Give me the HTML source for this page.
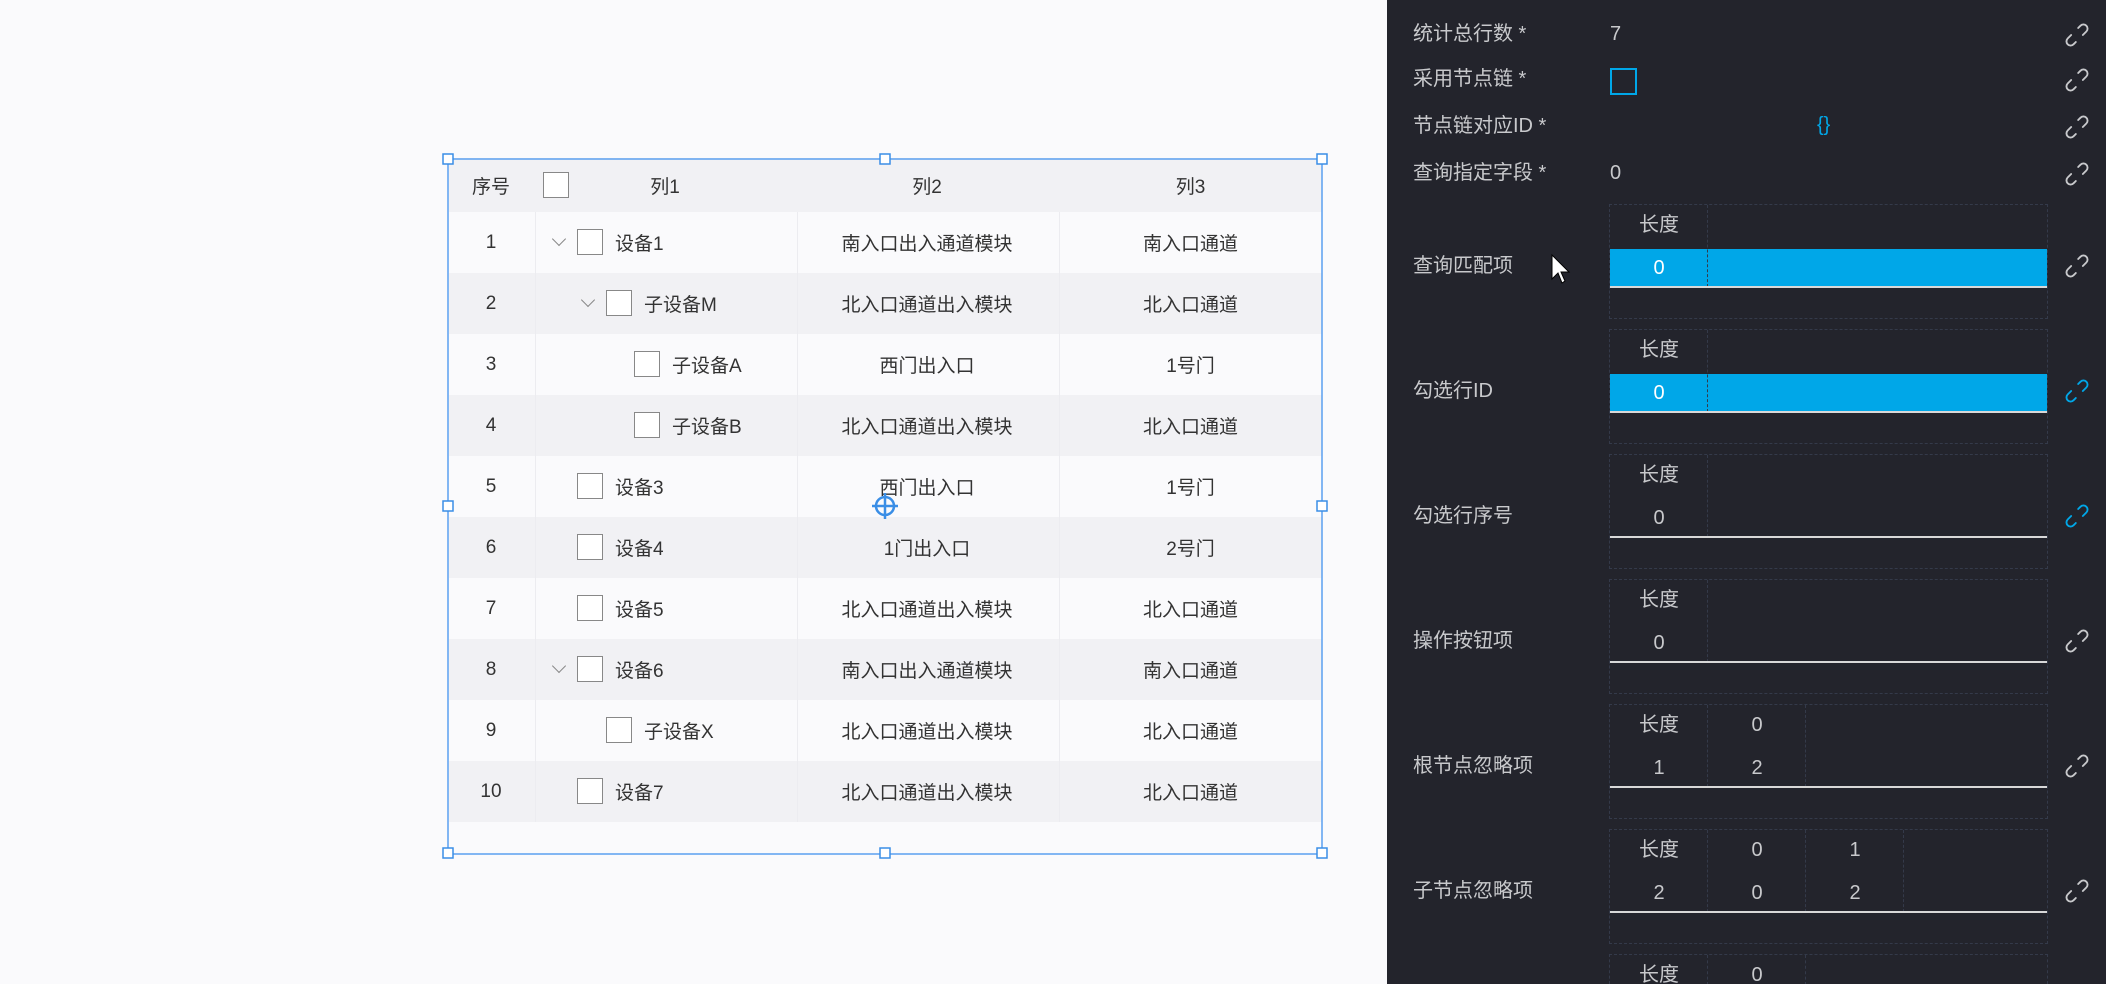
<!DOCTYPE html>
<html style="width:2106px;height:984px;overflow:hidden"><head><meta charset="utf-8">
<style>
*{margin:0;padding:0;box-sizing:border-box}
body{width:2106px;height:984px;overflow:hidden;background:#fafafc;font-family:"Liberation Sans","Noto Sans CJK SC",sans-serif;position:relative}
.tbl{position:absolute;left:449px;top:158px;width:873px;}
.row{position:absolute;left:0;width:873px;height:61px;font-size:19px;color:#333}
.row.alt,.hdr{background:#f1f1f4}
.hdr{height:54px;top:0}
.c{position:absolute;top:0;height:100%;display:flex;align-items:center;justify-content:center}
.vl{position:absolute;top:54px;width:1px;height:610px;background:#ececf0}
.cb{position:absolute;width:26px;height:26px;border:1.5px solid #888;background:#fff}
.chev{position:absolute;width:10px;height:10px;border-right:1.5px solid #888;border-bottom:1.5px solid #888;transform:rotate(45deg)}
.panel{position:absolute;left:1387px;top:0;width:719px;height:984px;background:#23242c;color:#c8c9cc;font-size:20px;overflow:hidden;line-height:24px}
.lab{position:absolute;left:26px}
.val{position:absolute;left:223px}
.lk{position:absolute;left:676px;width:28px;height:28px}
.box{position:absolute;left:222px;width:439px;height:115px;border:1px dashed #343a4a}
.box .col{position:absolute;top:0;height:82px;width:98px;border-right:1px dashed #343a4a}
.box .t{position:absolute;width:98px;text-align:center;line-height:24px;height:24px}
.box .ul{position:absolute;left:0;top:81px;width:437px;height:2px;background:#d8d8d8}
.box .blue{position:absolute;left:0;top:44px;width:437px;height:37px;background:#00a7e8}
</style></head><body>
<div class="tbl">
<div class="hdr row" style="height:54px">
<div class="c" style="left:0;width:84px">序号</div>
<div class="cb" style="left:94px;top:14px"></div>
<div class="c" style="left:86px;width:260px">列1</div>
<div class="c" style="left:347px;width:262px">列2</div>
<div class="c" style="left:610px;width:263px">列3</div>
</div>
</div>
<div id="rows"></div>
<svg style="position:absolute;left:0;top:0" width="2106" height="984">
<rect x="448" y="159" width="874" height="695" fill="none" stroke="#5aa0f0" stroke-width="1.5"/>
<g fill="#fff" stroke="#3a8ee6" stroke-width="1.5">
<rect x="443" y="154" width="10" height="10"/><rect x="880" y="154" width="10" height="10"/><rect x="1317" y="154" width="10" height="10"/>
<rect x="443" y="501" width="10" height="10"/><rect x="1317" y="501" width="10" height="10"/>
<rect x="443" y="848" width="10" height="10"/><rect x="880" y="848" width="10" height="10"/><rect x="1317" y="848" width="10" height="10"/>
</g>
<g stroke="#3a8ee6" stroke-width="2.5" fill="none"><circle cx="885" cy="506" r="9"/><line x1="872" y1="506" x2="898" y2="506"/><line x1="885" y1="493" x2="885" y2="519"/></g>
</svg>
<div class="panel" id="panel">
<div class="lab" style="top:22px">统计总行数 *</div><div class="val" style="top:22px">7</div>
<div class="lab" style="top:67px">采用节点链 *</div><div style="position:absolute;left:223px;top:68px;width:27px;height:27px;border:2px solid #00a7e8"></div>
<div class="lab" style="top:114px">节点链对应ID *</div><div style="position:absolute;left:430px;top:113px;color:#00a7e8">{}</div>
<div class="lab" style="top:161px">查询指定字段 *</div><div class="val" style="top:161px">0</div>
</div>
<svg style="position:absolute;left:1550px;top:253px" width="22" height="32"><path d="M2 2 L2 26 L8 20 L12 30 L15 28 L11 19 L19 19 Z" fill="#fff" stroke="#000" stroke-width="1"/></svg>
<script>
var data=[[1,1,true,'设备1','南入口出入通道模块','南入口通道'],[2,2,true,'子设备M','北入口通道出入模块','北入口通道'],[3,3,false,'子设备A','西门出入口','1号门'],[4,3,false,'子设备B','北入口通道出入模块','北入口通道'],[5,1,false,'设备3','西门出入口','1号门'],[6,1,false,'设备4','1门出入口','2号门'],[7,1,false,'设备5','北入口通道出入模块','北入口通道'],[8,1,true,'设备6','南入口出入通道模块','南入口通道'],[9,2,false,'子设备X','北入口通道出入模块','北入口通道'],[10,1,false,'设备7','北入口通道出入模块','北入口通道']];
var h='';
data.forEach(function(d,i){var top=212+i*61;var cbx=[0,577,606,634][d[1]];
h+='<div class="row'+(i%2?' alt':'')+'" style="left:449px;top:'+top+'px">';
h+='<div class="c" style="left:0;width:84px">'+d[0]+'</div>';
if(d[2])h+='<div class="chev" style="left:'+(cbx-449-23)+'px;top:22px"></div>';
h+='<div class="cb" style="left:'+(cbx-449)+'px;top:17px"></div>';
h+='<div class="c" style="left:'+(cbx-449+38)+'px">'+d[3]+'</div>';
h+='<div class="c" style="left:347px;width:262px">'+d[4]+'</div>';
h+='<div class="c" style="left:610px;width:263px">'+d[5]+'</div></div>';});
[535,797,1059].forEach(function(x){h+='<div class="vl" style="left:'+x+'px;top:212px;height:610px"></div>'});
document.getElementById('rows').innerHTML=h;
var link=function(y,c){return '<svg class="lk" style="top:'+y+'px" viewBox="0 0 24 24" fill="none" stroke="'+c+'" stroke-width="1.6" stroke-linecap="round"><path d="M13 6 l2-2 a3.5 3.5 0 0 1 5 5 l-3 3"/><path d="M11 18 l-2 2 a3.5 3.5 0 0 1-5-5 l3-3"/></svg>'};
var p='';
[21,66,113,160].forEach(function(y){p+=link(y,'#c8c9cc')});
var boxes=[['查询匹配项',[['长度'],['0']],true,'#c8c9cc'],['勾选行ID',[['长度'],['0']],true,'#00a7e8'],['勾选行序号',[['长度'],['0']],false,'#00a7e8'],['操作按钮项',[['长度'],['0']],false,'#c8c9cc'],['根节点忽略项',[['长度','0'],['1','2']],false,'#c8c9cc'],['子节点忽略项',[['长度','0','1'],['2','0','2']],false,'#c8c9cc'],['',[['长度','0'],['','']],false,null]];
boxes.forEach(function(b,i){var t=204+i*125;var last=(i==6);
if(b[0])p+='<div class="lab" style="top:'+(t+50)+'px">'+b[0]+'</div>';
p+='<div class="box" style="top:'+t+'px'+(last?';height:30px;border-bottom:none':'')+'">';
if(b[2])p+='<div class="blue"></div>';
for(var k=0;k<b[1][0].length;k++){p+='<div class="col" style="left:'+(k*98)+'px'+(last?';height:30px':'')+'"></div>';
p+='<div class="t" style="left:'+(k*98)+'px;top:8px">'+b[1][0][k]+'</div>';
if(!last)p+='<div class="t" style="left:'+(k*98)+'px;top:51px;color:'+(b[2]?'#fff':'#c8c9cc')+'">'+b[1][1][k]+'</div>';}
if(!last)p+='<div class="ul"></div>';
p+='</div>';
if(b[3])p+=link(t+48,b[3]);});
document.getElementById('panel').innerHTML+=p;
</script>
</body></html>
